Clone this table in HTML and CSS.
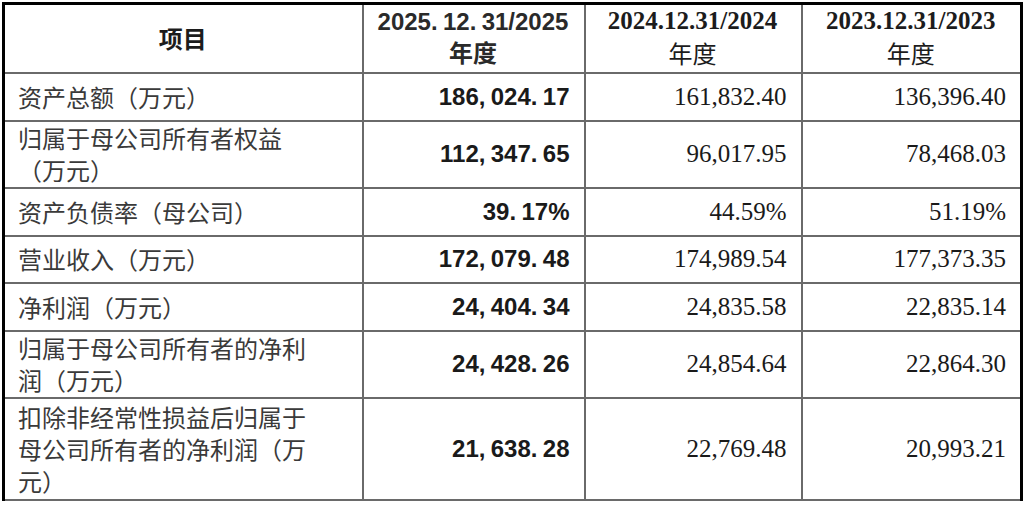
FILE: index.html
```html
<!DOCTYPE html>
<html lang="zh-CN">
<head>
<meta charset="utf-8">
<title>主要财务数据</title>
<link rel="stylesheet" href="styles.css">
</head>
<body>
<table class="fin">
  <colgroup>
    <col class="c-item">
    <col class="c-y1">
    <col class="c-y2">
    <col class="c-y3">
  </colgroup>
  <thead>
    <tr class="hd">
      <th class="t-item">项目</th>
      <th class="t-sans">2025<span class="p">.</span>12<span class="p">.</span>31/2025<br>年度</th>
      <th class="t-serif"><span class="yr">2024.12.31/2024</span><br><span class="nd">年度</span></th>
      <th class="t-serif"><span class="yr">2023.12.31/2023</span><br><span class="nd">年度</span></th>
    </tr>
  </thead>
  <tbody>
    <tr class="h1">
      <td class="lbl"><span class="lt">资产总额（万元）</span></td>
      <td class="v1">186<span class="p">,</span>024<span class="p">.</span>17</td>
      <td class="v">161,832.40</td>
      <td class="v">136,396.40</td>
    </tr>
    <tr class="h2">
      <td class="lbl"><span class="lt">归属于母公司所有者权益（万元）</span></td>
      <td class="v1">112<span class="p">,</span>347<span class="p">.</span>65</td>
      <td class="v">96,017.95</td>
      <td class="v">78,468.03</td>
    </tr>
    <tr class="h1">
      <td class="lbl"><span class="lt">资产负债率（母公司）</span></td>
      <td class="v1">39<span class="p">.</span>17%</td>
      <td class="v">44.59%</td>
      <td class="v">51.19%</td>
    </tr>
    <tr class="h1b">
      <td class="lbl"><span class="lt">营业收入（万元）</span></td>
      <td class="v1">172<span class="p">,</span>079<span class="p">.</span>48</td>
      <td class="v">174,989.54</td>
      <td class="v">177,373.35</td>
    </tr>
    <tr class="h1">
      <td class="lbl"><span class="lt">净利润（万元）</span></td>
      <td class="v1">24<span class="p">,</span>404<span class="p">.</span>34</td>
      <td class="v">24,835.58</td>
      <td class="v">22,835.14</td>
    </tr>
    <tr class="h2">
      <td class="lbl"><span class="lt">归属于母公司所有者的净利润（万元）</span></td>
      <td class="v1">24<span class="p">,</span>428<span class="p">.</span>26</td>
      <td class="v">24,854.64</td>
      <td class="v">22,864.30</td>
    </tr>
    <tr class="h3">
      <td class="lbl"><span class="lt">扣除非经常性损益后归属于母公司所有者的净利润（万元）</span></td>
      <td class="v1">21<span class="p">,</span>638<span class="p">.</span>28</td>
      <td class="v">22,769.48</td>
      <td class="v">20,993.21</td>
    </tr>
  </tbody>
</table>
</body>
</html>
```
FILE: styles.css
```css
html, body {
  margin: 0;
  padding: 0;
  background: #ffffff;
}
body {
  padding: 2px 0 0 2px;
}
.fin {
  border-collapse: collapse;
  table-layout: fixed;
  width: 1021px;
  border-top: 3px solid #000;
  border-left: 3px solid #000;
  border-right: 3px solid #000;
  border-bottom: 2px solid #222;
  color: #1c1c1c;
}
.c-item { width: 359px; }
.c-y1 { width: 222px; }
.c-y2 { width: 217px; }
.c-y3 { width: 220px; }

.fin th, .fin td {
  border: 2px solid #6a6a6a;
  padding: 0 14px 0 13px;
  vertical-align: middle;
  line-height: 32px;
}
.fin tr.hd th { border-top: 3px solid #000; }
.fin tr > :first-child { border-left: 3px solid #000; }
.fin tr > :last-child { border-right: 3px solid #000; }

.hd { height: 69px; }
.h1 { height: 48px; }
.h1b { height: 47px; }
.h2 { height: 67px; }
.h3 { height: 102px; }

.t-item {
  font-family: "Noto Sans CJK SC", sans-serif;
  font-size: 24px;
  font-weight: 700;
  text-align: center;
}
.t-sans {
  font-family: "Liberation Sans", "Noto Sans CJK SC", sans-serif;
  font-size: 24px;
  font-weight: 700;
  text-align: center;
  line-height: 31px;
  color: #2a2a2a;
}
.t-serif {
  font-family: "Liberation Serif", "Noto Sans CJK SC", serif;
  font-size: 25px;
  text-align: center;
  line-height: 31px;
}
.t-serif .yr { font-weight: 700; }
.t-serif .nd {
  font-family: "Noto Sans CJK SC", sans-serif;
  font-weight: 400;
  font-size: 24px;
}

.lbl {
  font-family: "Noto Sans CJK SC", sans-serif;
  font-size: 24px;
  font-weight: 400;
  color: #3a3a3a;
  text-align: left;
}
.lt {
  display: block;
  width: 300px;
}
.v1 {
  font-family: "Liberation Sans", sans-serif;
  font-size: 24px;
  font-weight: 700;
  text-align: right;
  padding-right: 10px;
  color: #1a1a1a;
}
.p {
  display: inline-block;
  width: 12px;
  text-align: left;
}
.v {
  font-family: "Liberation Serif", serif;
  font-size: 25px;
  text-align: right;
  padding-right: 13px;
  color: #1a1a1a;
}
```
